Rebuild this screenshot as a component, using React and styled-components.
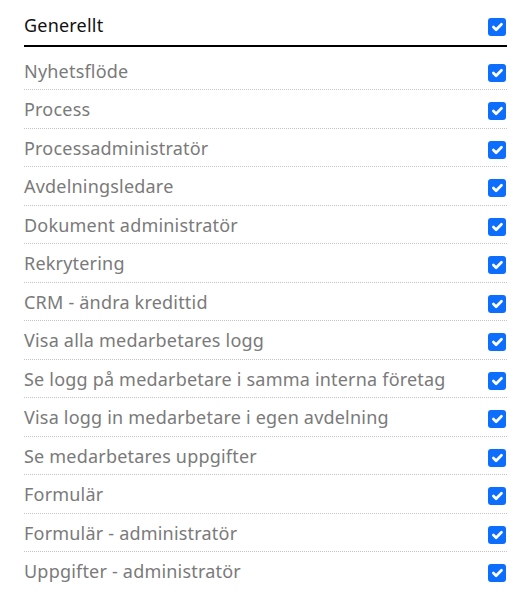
import React from "react";
import styled, { createGlobalStyle } from "styled-components";

const GlobalStyle = createGlobalStyle`
  body {
    margin: 0;
    background: #fff;
    font-family: "Noto Sans", "Open Sans", sans-serif;
  }
`;

const Panel = styled.div`
  width: 483px;
  padding: 4px 22px 0 24px;
`;

const Header = styled.div`
  display: flex;
  align-items: center;
  justify-content: space-between;
  padding: 7.5px 0 6.5px;
  border-bottom: 2px solid #000;
  margin-bottom: 4.5px;
`;

const HeaderTitle = styled.span`
  font-size: 18px;
  line-height: 27px;
  letter-spacing: 0.2px;
  color: #111;
`;

const Row = styled.label`
  display: flex;
  align-items: center;
  justify-content: space-between;
  padding: 6.25px 0 4.25px;
  border-bottom: ${(p) => (p.$last ? "none" : "1px dotted #c4c4c4")};
`;

const RowLabel = styled.span`
  font-size: 18px;
  line-height: 27px;
  letter-spacing: 0.2px;
  color: #7a7a7a;
`;

const Box = styled.span`
  width: 18px;
  height: 18px;
  margin: 3px 1px 0 0;
  border-radius: 3px;
  background: #0d6efd;
  display: flex;
  align-items: center;
  justify-content: center;
  flex-shrink: 0;
`;

const Check = () => (
  <Box>
    <svg width="18" height="18" viewBox="0 0 20 20">
      <path
        d="M6 10l3 3l6-6"
        fill="none"
        stroke="#fff"
        strokeWidth="3"
        strokeLinecap="round"
        strokeLinejoin="round"
      />
    </svg>
  </Box>
);

const items = [
  "Nyhetsflöde",
  "Process",
  "Processadministratör",
  "Avdelningsledare",
  "Dokument administratör",
  "Rekrytering",
  "CRM - ändra kredittid",
  "Visa alla medarbetares logg",
  "Se logg på medarbetare i samma interna företag",
  "Visa logg in medarbetare i egen avdelning",
  "Se medarbetares uppgifter",
  "Formulär",
  "Formulär - administratör",
  "Uppgifter - administratör",
];

const App = () => {
  return (
    <>
      <GlobalStyle />
      <Panel>
        <Header>
          <HeaderTitle>Generellt</HeaderTitle>
          <Check />
        </Header>
        {items.map((item, i) => (
          <Row key={item} $last={i === items.length - 1}>
            <RowLabel>{item}</RowLabel>
            <Check />
          </Row>
        ))}
      </Panel>
    </>
  );
};

export default App;
